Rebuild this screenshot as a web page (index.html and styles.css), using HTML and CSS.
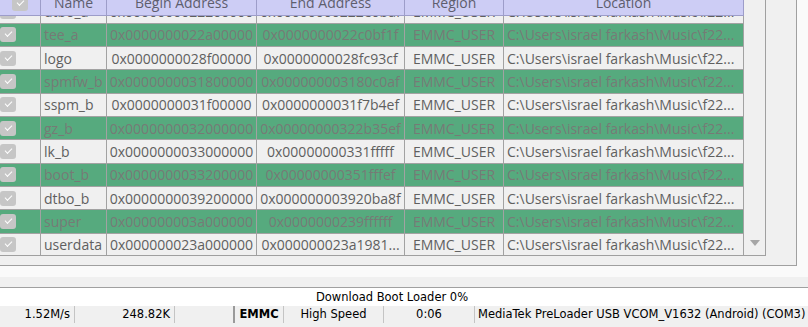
FILE: index.html
```html
<!DOCTYPE html>
<html lang="en">
<head>
  <meta charset="UTF-8" />
  <title>Download</title>
  <link rel="stylesheet" href="styles.css">
</head>
<body>
  <div class="main">
    <div class="upper">
      <div class="panel">
        <!-- partition table -->
        <div class="table">
          <div class="cols">
            <div class="head">
              <div class="hcell chk-col"><span class="check"></span></div>
              <div class="hcell">Name</div>
              <div class="hcell">Begin Address</div>
              <div class="hcell">End Address</div>
              <div class="hcell">Region</div>
              <div class="hcell">Location</div>
            </div>
            <div class="rows">
              <div class="rows-inner">
                <div class="row">
                  <div class="cell"><span class="check"></span></div>
                  <div class="cell name">dtbo_a</div>
                  <div class="cell addr">0x0000000022200000</div>
                  <div class="cell addr">0x00000000222e0baf</div>
                  <div class="cell addr">EMMC_USER</div>
                  <div class="cell loc">C:\Users\israel farkash\Music\f22...</div>
                </div>
                <div class="row on">
                  <div class="cell"><span class="check"></span></div>
                  <div class="cell name">tee_a</div>
                  <div class="cell addr">0x0000000022a00000</div>
                  <div class="cell addr">0x0000000022c0bf1f</div>
                  <div class="cell addr">EMMC_USER</div>
                  <div class="cell loc">C:\Users\israel farkash\Music\f22...</div>
                </div>
                <div class="row">
                  <div class="cell"><span class="check"></span></div>
                  <div class="cell name">logo</div>
                  <div class="cell addr">0x0000000028f00000</div>
                  <div class="cell addr">0x0000000028fc93cf</div>
                  <div class="cell addr">EMMC_USER</div>
                  <div class="cell loc">C:\Users\israel farkash\Music\f22...</div>
                </div>
                <div class="row on">
                  <div class="cell"><span class="check"></span></div>
                  <div class="cell name">spmfw_b</div>
                  <div class="cell addr">0x0000000031800000</div>
                  <div class="cell addr">0x000000003180c0af</div>
                  <div class="cell addr">EMMC_USER</div>
                  <div class="cell loc">C:\Users\israel farkash\Music\f22...</div>
                </div>
                <div class="row">
                  <div class="cell"><span class="check"></span></div>
                  <div class="cell name">sspm_b</div>
                  <div class="cell addr">0x0000000031f00000</div>
                  <div class="cell addr">0x0000000031f7b4ef</div>
                  <div class="cell addr">EMMC_USER</div>
                  <div class="cell loc">C:\Users\israel farkash\Music\f22...</div>
                </div>
                <div class="row on">
                  <div class="cell"><span class="check"></span></div>
                  <div class="cell name">gz_b</div>
                  <div class="cell addr">0x0000000032000000</div>
                  <div class="cell addr">0x00000000322b35ef</div>
                  <div class="cell addr">EMMC_USER</div>
                  <div class="cell loc">C:\Users\israel farkash\Music\f22...</div>
                </div>
                <div class="row">
                  <div class="cell"><span class="check"></span></div>
                  <div class="cell name">lk_b</div>
                  <div class="cell addr">0x0000000033000000</div>
                  <div class="cell addr">0x00000000331fffff</div>
                  <div class="cell addr">EMMC_USER</div>
                  <div class="cell loc">C:\Users\israel farkash\Music\f22...</div>
                </div>
                <div class="row on">
                  <div class="cell"><span class="check"></span></div>
                  <div class="cell name">boot_b</div>
                  <div class="cell addr">0x0000000033200000</div>
                  <div class="cell addr">0x00000000351fffef</div>
                  <div class="cell addr">EMMC_USER</div>
                  <div class="cell loc">C:\Users\israel farkash\Music\f22...</div>
                </div>
                <div class="row">
                  <div class="cell"><span class="check"></span></div>
                  <div class="cell name">dtbo_b</div>
                  <div class="cell addr">0x0000000039200000</div>
                  <div class="cell addr">0x000000003920ba8f</div>
                  <div class="cell addr">EMMC_USER</div>
                  <div class="cell loc">C:\Users\israel farkash\Music\f22...</div>
                </div>
                <div class="row on">
                  <div class="cell"><span class="check"></span></div>
                  <div class="cell name">super</div>
                  <div class="cell addr">0x000000003a000000</div>
                  <div class="cell addr">0x0000000239ffffff</div>
                  <div class="cell addr">EMMC_USER</div>
                  <div class="cell loc">C:\Users\israel farkash\Music\f22...</div>
                </div>
                <div class="row">
                  <div class="cell"><span class="check"></span></div>
                  <div class="cell name">userdata</div>
                  <div class="cell addr">0x000000023a000000</div>
                  <div class="cell addr">0x000000023a1981...</div>
                  <div class="cell addr">EMMC_USER</div>
                  <div class="cell loc">C:\Users\israel farkash\Music\f22...</div>
                </div>
              </div>
            </div>
          </div>
          <!-- vertical scrollbar -->
          <div class="scroll">
            <span class="arrow-down"></span>
          </div>
        </div>
      </div>
    </div>
    <div class="strip"></div>
  </div>

  <div class="progress">Download Boot Loader 0%</div>

  <div class="status">
    <div class="sc sc-speed">1.52M/s</div>
    <div class="sc sc-size">248.82K</div>
    <div class="sc sc-blank"></div>
    <div class="sc sc-type">EMMC</div>
    <div class="sc sc-mode">High Speed</div>
    <div class="sc sc-time">0:06</div>
    <div class="sc sc-port">MediaTek PreLoader USB VCOM_V1632 (Android) (COM3)</div>
  </div>
</body>
</html>
```

FILE: styles.css
```css
/* window */
body {
  margin: 0;
  width: 808px;
  height: 327px;
  overflow: hidden;
  background-color: #f0f0f0;
  font-family: 'DejaVu Sans', sans-serif;
}

.main {
  height: 287px;
  background-color: #fafafa;
  border-bottom: 1px solid #a0a0a0;
  display: flex;
  flex-direction: column;
}
.upper {
  height: 277px;
  display: flex;
}
.strip {
  height: 10px;
  background-color: #f0f0f0;
}

/* tab page holding the table */
.panel {
  width: 797px;
  height: 266px;
  box-sizing: border-box;
  background-color: #f0f0f0;
  border-right: 1px solid #a0a0a0;
  border-bottom: 1px solid #a0a0a0;
  overflow: hidden;
}

.table {
  width: 766px;
  height: 265px;
  margin-top: -9px;
  box-sizing: border-box;
  border-right: 1px solid #a0a0a0;
  border-bottom: 1px solid #a0a0a0;
  display: flex;
  font-family: 'Open Sans', 'Noto Sans', sans-serif;
  font-size: 14px;
}
.cols {
  width: 744px;
  display: flex;
  flex-direction: column;
}

/* header */
.head {
  display: grid;
  grid-template-columns: 41px 66px 150px 148px 99px 240px;
  height: 25px;
}
.hcell {
  background-color: #cdcdf5;
  border-right: 1px solid #9d9dc9;
  border-bottom: 1px solid #9d9dc9;
  color: #5e5e6e;
  display: flex;
  align-items: center;
  justify-content: center;
  line-height: 1;
}

/* body rows */
.rows {
  height: 239px;
  overflow: hidden;
}
.rows-inner {
  margin-top: -15.6px;
}
.row {
  display: grid;
  grid-template-columns: 41px 66px 150px 148px 99px 240px;
  height: 23.33px;
  background-color: #f0f0f0;
  color: #5f5f5f;
}
.row.on {
  background-color: #56aa7e;
  color: #767a76;
}
.cell {
  box-sizing: border-box;
  border-right: 1px solid #a2a2a2;
  border-bottom: 1px solid #a2a2a2;
  display: flex;
  align-items: center;
  white-space: nowrap;
  overflow: hidden;
}
.cell.name {
  padding-left: 3px;
}
.cell.addr {
  justify-content: center;
}
.cell.loc {
  padding-left: 3px;
}

/* check box */
.check {
  position: relative;
  display: inline-block;
  width: 16px;
  height: 15px;
  border-radius: 3px;
  background-color: #c6c6c6;
}
.check::after {
  content: "";
  position: absolute;
  left: 5px;
  top: 3px;
  width: 6px;
  height: 3px;
  border-left: 1.5px solid #ffffff;
  border-bottom: 1.5px solid #ffffff;
  transform: rotate(-45deg);
  transform-origin: 50% 50%;
  top: 4px;
}

/* scrollbar */
.scroll {
  width: 21px;
  display: flex;
  align-items: flex-end;
  justify-content: center;
  padding-bottom: 9px;
  box-sizing: border-box;
}
.arrow-down {
  width: 0;
  height: 0;
  border-left: 5px solid transparent;
  border-right: 5px solid transparent;
  border-top: 6px solid #a6a6a6;
}

/* progress text */
.progress {
  height: 18px;
  background-color: #ffffff;
  font-size: 11.5px;
  color: #000000;
  text-align: center;
  padding-right: 24px;
  line-height: 18px;
}

/* status bar */
.status {
  display: flex;
  height: 17px;
  font-size: 11.5px;
  color: #000000;
  background-color: #f0f0f0;
}
.sc {
  box-sizing: border-box;
  line-height: 17px;
  white-space: nowrap;
  border-left: 1px solid #c4c4c4;
}
.sc-speed {
  width: 74px;
  text-align: right;
  padding-right: 4px;
  border-left: none;
}
.sc-size {
  width: 100px;
  text-align: right;
  padding-right: 4px;
}
.sc-blank {
  width: 59px;
}
.sc-type {
  width: 50px;
  text-align: center;
  font-weight: bold;
  border-left: 2px solid #9a9a9a;
}
.sc-mode {
  width: 100px;
  text-align: center;
}
.sc-time {
  width: 91px;
  text-align: center;
}
.sc-port {
  flex: 1;
  padding-left: 3px;
}
```
